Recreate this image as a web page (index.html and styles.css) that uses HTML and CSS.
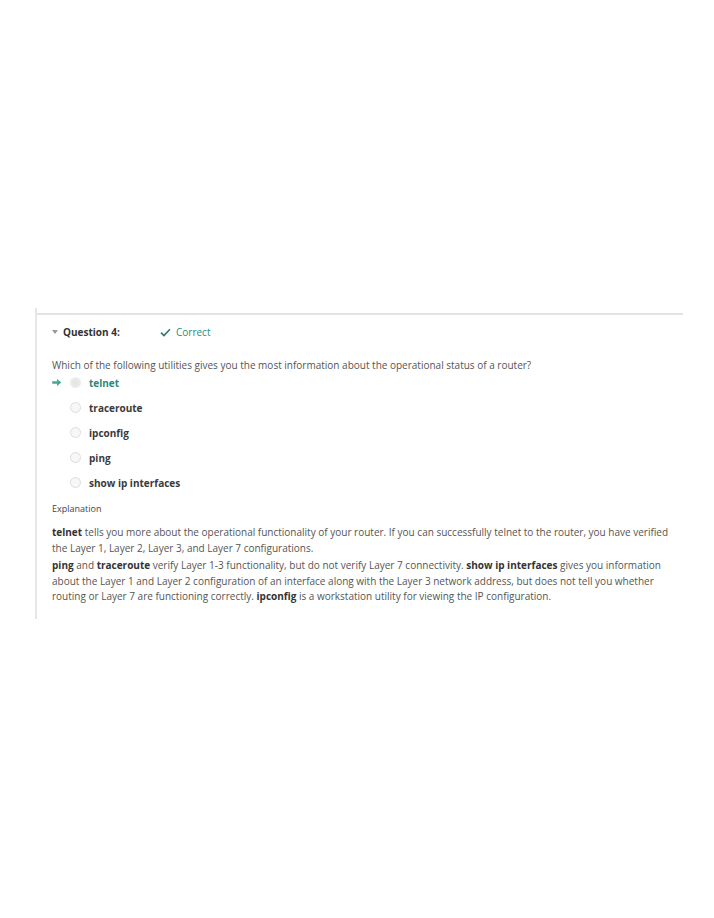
FILE: index.html
```html
<!DOCTYPE html>
<html>
<head>
<meta charset="utf-8">
<link rel="stylesheet" href="styles.css">
</head>
<body>
<div class="page">
  <div class="card">
    <div class="head">
      <span class="caret"></span>
      <span class="qtitle">Question 4:</span>
      <span class="status"><svg class="check" viewBox="0 0 12 10" width="11" height="9"><path d="M1 5.2 L4.3 8.4 L11 1.4" fill="none" stroke="#2b7a6e" stroke-width="1.8"/></svg>Correct</span>
    </div>
    <p class="question">Which of the following utilities gives you the most information about the operational status of a router?</p>
    <ul class="options">
      <li class="opt chosen"><span class="arrow"><svg viewBox="0 0 11 8" width="10" height="7"><path d="M0 2.5 H5.5 V0 L10.5 4 L5.5 8 V5.5 H0 Z" fill="#4aa896"/></svg></span><span class="radio sel"></span><span class="label">telnet</span></li>
      <li class="opt"><span class="arrow"></span><span class="radio"></span><span class="label">traceroute</span></li>
      <li class="opt"><span class="arrow"></span><span class="radio"></span><span class="label">ipconfig</span></li>
      <li class="opt"><span class="arrow"></span><span class="radio"></span><span class="label">ping</span></li>
      <li class="opt"><span class="arrow"></span><span class="radio"></span><span class="label">show ip interfaces</span></li>
    </ul>
    <div class="expl-title">Explanation</div>
    <p class="expl"><b>telnet</b> tells you more about the operational functionality of your router. If you can successfully telnet to the router, you have verified the Layer 1, Layer 2, Layer 3, and Layer 7 configurations.</p>
    <p class="expl"><b>ping</b> and <b>traceroute</b> verify Layer 1-3 functionality, but do not verify Layer 7 connectivity. <b>show ip interfaces</b> gives you information about the Layer 1 and Layer 2 configuration of an interface along with the Layer 3 network address, but does not tell you whether routing or Layer 7 are functioning correctly. <b>ipconfig</b> is a workstation utility for viewing the IP configuration.</p>
  </div>
</div>
</body>
</html>
```
FILE: styles.css
```css
html, body { margin: 0; padding: 0; background: #fff; }
body { font-family: "Open Sans", "Liberation Sans", sans-serif; color: #555; }
.page { width: 714px; height: 918px; padding-top: 308px; box-sizing: border-box; }
.card {
  margin-left: 35px;
  width: 648px;
  border-left: 2px solid #e6e6e6;
  padding: 4px 0 14px 0;
  box-sizing: border-box;
  position: relative;
}
.card::before {
  content: "";
  position: absolute;
  left: 0; right: 0; top: 5px;
  height: 2px;
  background: #e4e4e4;
}
.head {
  display: flex;
  align-items: center;
  padding: 12px 0 0 15px;
  height: 16px;
  font-size: 10px;
}
.caret {
  width: 0; height: 0;
  border-left: 3.5px solid transparent;
  border-right: 3.5px solid transparent;
  border-top: 4px solid #999;
  margin-right: 5px;
}
.qtitle { font-weight: 700; color: #333; width: 97px; }
.status { color: #2e8b7c; display: flex; align-items: center; }
.check { margin-right: 5px; }
.question { margin: 19px 0 0 15px; font-size: 10px; line-height: 13px; }
.options { list-style: none; margin: -2px 0 0 0; padding: 0; }
.opt { display: flex; align-items: center; height: 25px; font-size: 10px; }
.arrow { width: 18px; margin-left: 15px; display: flex; align-items: center; }
.radio {
  width: 11px; height: 11px; border-radius: 50%;
  border: 1px solid #ddd; background: #f7f7f7; box-sizing: border-box;
}
.radio.sel { background: #e6e6e6; border: 2px solid #ececec; }
.label { margin-left: 8px; font-weight: 700; color: #3a3a3a; }
.chosen .label { color: #2b8a7b; }
.expl-title { margin: 8px 0 0 15px; font-size: 9px; line-height: 12px; color: #444; }
.expl { margin: 10px 0 0 15px; font-size: 10px; line-height: 15.5px; width: 625px; }
.expl + .expl { margin-top: 2px; }
.expl b { color: #333; }
```
